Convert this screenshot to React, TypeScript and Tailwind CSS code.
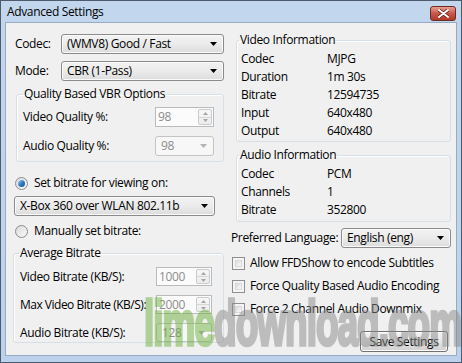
const font = "font-['Segoe_UI','Open_Sans',sans-serif]";

const Arrow = ({ color = "#000" }: { color?: string }) => (
  <svg width="7" height="4" viewBox="0 0 7 4">
    <polygon points="0,0 7,0 3.5,4" fill={color} />
  </svg>
);

const Combo = ({ value, className }: { value: string; className?: string }) => (
  <div
    className={`flex items-center h-[20px] border border-[#8b8b8b] rounded-[3px] bg-gradient-to-b from-[#f3f3f3] via-[#ebebeb] to-[#dcdcdc] pl-[5px] pr-[6px] shadow-[inset_0_0_0_1px_#fafafa] ${className ?? ""}`}
  >
    <span className="flex-1 whitespace-nowrap overflow-hidden">{value}</span>
    <Arrow />
  </div>
);

const Spin = ({ value, className }: { value: string; className?: string }) => (
  <div
    className={`flex items-stretch border border-[#b9bcbf] bg-[#fbfbfb] text-[#8d8d8d] pl-[2px] pr-[1px] py-[1px] ${className ?? ""}`}
  >
    <span className="flex-1 flex items-center">{value}</span>
    <div className="w-[14px] flex flex-col border border-[#c9cbcd] rounded-[2px] bg-gradient-to-b from-[#f7f7f7] to-[#ececec]">
      <div className="flex-1 flex items-center justify-center border-b border-[#d4d6d8]">
        <svg width="5" height="3" viewBox="0 0 5 3">
          <polygon points="0,3 5,3 2.5,0" fill="#a5a5a5" />
        </svg>
      </div>
      <div className="flex-1 flex items-center justify-center">
        <svg width="5" height="3" viewBox="0 0 5 3">
          <polygon points="0,0 5,0 2.5,3" fill="#a5a5a5" />
        </svg>
      </div>
    </div>
  </div>
);

const DisabledCombo = ({ value, className }: { value: string; className?: string }) => (
  <div
    className={`flex items-center border border-[#c2c4c6] rounded-[3px] bg-[#f7f7f7] text-[#8d8d8d] pl-[5px] pr-[6px] ${className ?? ""}`}
  >
    <span className="flex-1">{value}</span>
    <Arrow color="#b4b4b4" />
  </div>
);

const Radio = ({ checked, label, className }: { checked?: boolean; label: string; className?: string }) => (
  <div className={`flex items-center h-[16px] ${className ?? ""}`}>
    <div className="w-[13px] h-[13px] rounded-full border border-[#8c8c8c] bg-gradient-to-br from-[#dcdcdc] to-[#f8f8f8] flex items-center justify-center">
      {checked && (
        <div className="w-[7px] h-[7px] rounded-full bg-gradient-to-br from-[#9fd1f5] via-[#2f7fc6] to-[#1a4f93]" />
      )}
    </div>
    <span className="ml-[6px] whitespace-nowrap">{label}</span>
  </div>
);

const Check = ({ label }: { label: string }) => (
  <div className="flex items-center h-[16px]">
    <div className="ml-[1px] w-[13px] h-[13px] border border-[#8f8f8f] bg-[#f4f4f4] p-[2px]">
      <div className="w-full h-full border border-[#d9d9d9] bg-gradient-to-br from-[#dadada] to-[#fbfbfb]" />
    </div>
    <span className="ml-[5px] whitespace-nowrap">{label}</span>
  </div>
);

const InfoRow = ({ k, v }: { k: string; v: string }) => (
  <div className="flex items-center h-[18px] pl-[2px]">
    <span className="w-[86px]">{k}</span>
    <span>{v}</span>
  </div>
);

export default function App() {
  return (
    <div
      className={`relative w-[462px] h-[363px] overflow-hidden border border-[#4d5b6d] bg-gradient-to-b from-[#c2d6ee] to-[#bcd2ec] text-[12px] leading-[16px] tracking-[-0.35px] text-black ${font}`}
    >
      {/* title bar */}
      <div className="flex items-center h-[21px] pl-[6px] pr-[5px]">
        <span className="text-[12px]">Advanced Settings</span>
        <div className="ml-auto mt-[4px] w-[26px] h-[15px] rounded-[3px] border border-[#6b2a22] bg-gradient-to-b from-[#e6a092] via-[#c9574a] to-[#b13a2a] flex items-center justify-center">
          <svg width="11" height="9" viewBox="0 0 11 9">
            <path d="M1 1 L10 8 M10 1 L1 8" stroke="#5a1d14" strokeWidth="3.4" strokeLinecap="round" />
            <path d="M1 1 L10 8 M10 1 L1 8" stroke="#fff" strokeWidth="2" strokeLinecap="round" />
          </svg>
        </div>
      </div>

      {/* client area */}
      <div className="mx-[4px] h-[334px] border border-[#97abc4] bg-[#f0f0f0] flex">
        {/* left column */}
        <div className="w-[212px] ml-[7px] pt-[11px] flex flex-col">
          <div className="flex items-center h-[20px]">
            <span className="w-[48px] pl-[2px]">Codec:</span>
            <Combo value="(WMV8) Good / Fast" className="w-[163px]" />
          </div>
          <div className="flex items-center h-[20px] mt-[7px]">
            <span className="w-[48px] pl-[2px]">Mode:</span>
            <Combo value="CBR (1-Pass)" className="w-[163px]" />
          </div>

          <fieldset className="mt-[5px] ml-[3px] w-[208px] border border-[#d5dfe5] rounded-[3px] px-[6px] pb-[5px] shadow-[inset_1px_1px_0_#fff]">
            <legend className="px-[1px] leading-[16px]">Quality Based VBR Options</legend>
            <div className="flex items-center h-[20px] mt-[5px]">
              <span className="w-[132px]">Video Quality %:</span>
              <Spin value="98" className="w-[59px] h-[20px]" />
            </div>
            <div className="flex items-center h-[20px] mt-[9px]">
              <span className="w-[132px]">Audio Quality %:</span>
              <DisabledCombo value="98" className="w-[59px] h-[20px]" />
            </div>
          </fieldset>

          <Radio checked label="Set bitrate for viewing on:" className="mt-[13px] ml-[2px]" />
          <Combo value="X-Box 360 over WLAN 802.11b" className="mt-[5px] ml-[1px] w-[201px]" />
          <Radio label="Manually set bitrate:" className="mt-[7px] ml-[2px]" />

          <fieldset className="mt-[6px] w-[211px] border border-[#d5dfe5] rounded-[3px] pl-[5px] pr-[6px] shadow-[inset_1px_1px_0_#fff]">
            <legend className="px-[1px] leading-[16px]">Average Bitrate</legend>
            <div className="flex items-center h-[19px] mt-[6px]">
              <span className="w-[137px] pl-[1px] whitespace-nowrap">Video Bitrate (KB/S):</span>
              <Spin value="1000" className="w-[56px] h-[19px]" />
            </div>
            <div className="flex items-center h-[19px] mt-[9px]">
              <span className="w-[137px] pl-[1px] whitespace-nowrap tracking-[-0.5px]">Max Video Bitrate (KB/S):</span>
              <Spin value="2000" className="w-[56px] h-[19px]" />
            </div>
            <div className="flex items-center h-[19px] mt-[9px]">
              <span className="w-[137px] pl-[1px] whitespace-nowrap">Audio Bitrate (KB/S):</span>
              <DisabledCombo value="128" className="w-[56px] h-[19px]" />
            </div>
          </fieldset>
        </div>

        {/* right column */}
        <div className="w-[220px] ml-[6px] pt-[9px] flex flex-col">
          <fieldset className="ml-[5px] w-[215px] border border-[#d5dfe5] rounded-[3px] px-[2px] pb-[1px] shadow-[inset_1px_1px_0_#fff]">
            <legend className="px-[1px] leading-[16px]">Video Information</legend>
            <div className="mt-[2px]">
              <InfoRow k="Codec" v="MJPG" />
              <InfoRow k="Duration" v="1m 30s" />
              <InfoRow k="Bitrate" v="12594735" />
              <InfoRow k="Input" v="640x480" />
              <InfoRow k="Output" v="640x480" />
            </div>
          </fieldset>

          <fieldset className="mt-[5px] ml-[5px] w-[215px] border border-[#d5dfe5] rounded-[3px] px-[2px] pb-[2px] shadow-[inset_1px_1px_0_#fff]">
            <legend className="px-[1px] leading-[16px]">Audio Information</legend>
            <div className="mt-[2px]">
              <InfoRow k="Codec" v="PCM" />
              <InfoRow k="Channels" v="1" />
              <InfoRow k="Bitrate" v="352800" />
            </div>
          </fieldset>

          <div className="flex items-center h-[20px] mt-[6px]">
            <span className="w-[110px] whitespace-nowrap">Preferred Language:</span>
            <Combo value="English (eng)" className="w-[110px]" />
          </div>

          <div className="mt-[7px] flex flex-col gap-[7px]">
            <Check label="Allow FFDShow to encode Subtitles" />
            <Check label="Force Quality Based Audio Encoding" />
            <Check label="Force 2 Channel Audio Downmix" />
          </div>

          <button className="mt-[14px] ml-auto mr-[3px] w-[88px] h-[21px] border border-[#707070] rounded-[3px] bg-gradient-to-b from-[#f3f3f3] via-[#e6e6e6] to-[#d0d0d0] shadow-[inset_0_0_0_1px_#fcfcfc]">
            Save Settings
          </button>
        </div>
      </div>

      {/* watermark */}
      <div className="pointer-events-none absolute left-[143px] top-[317px] flex opacity-50 font-['Liberation_Sans',sans-serif] font-bold text-[37px] leading-none tracking-[-1px] scale-y-[1.7] origin-bottom [-webkit-text-stroke:2px_currentColor]">
        <span className="text-[#6fb23f]">lime</span>
        <span className="text-[#8a8a8a]">download.com</span>
      </div>
    </div>
  );
}
